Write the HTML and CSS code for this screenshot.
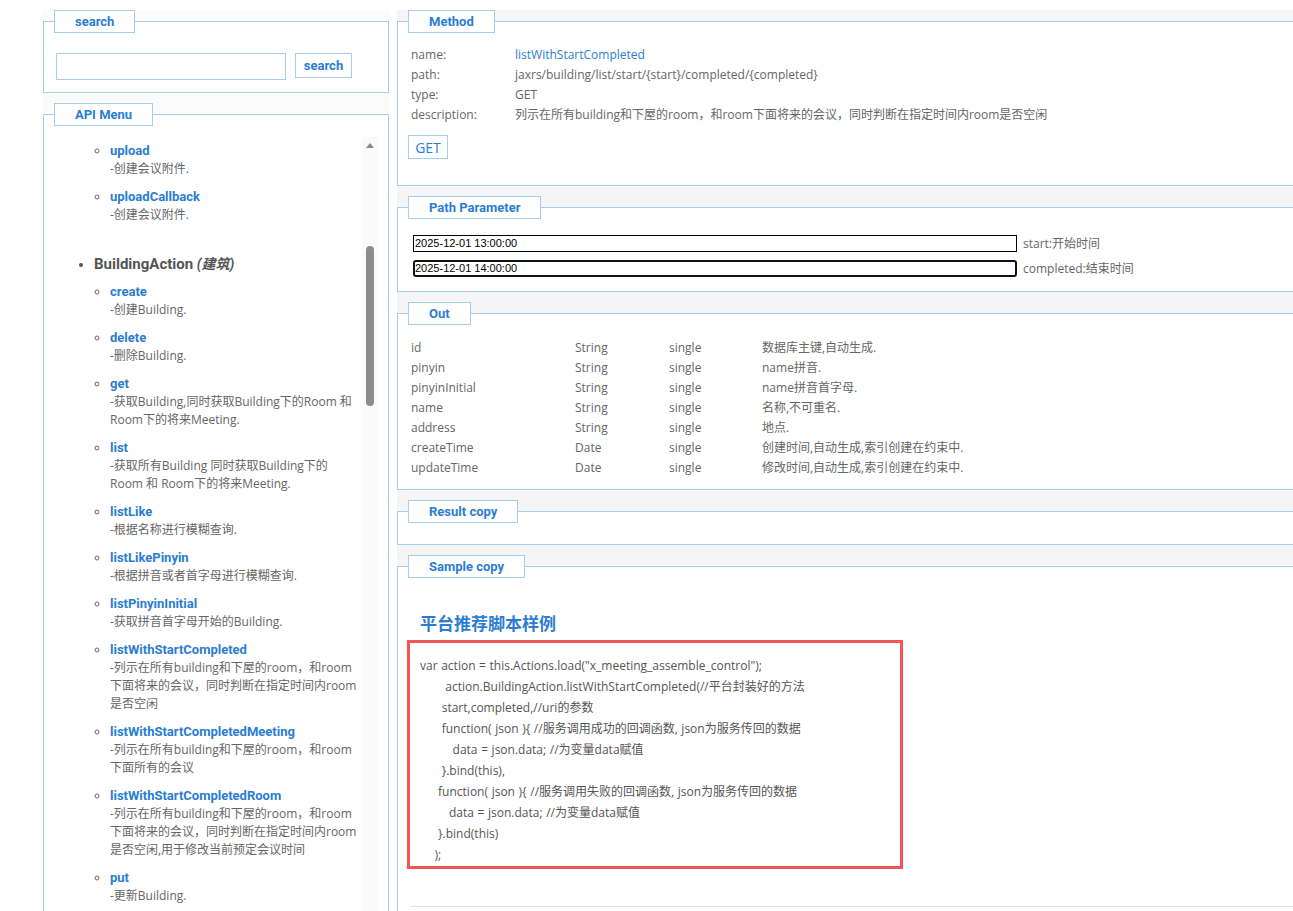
FILE: index.html
```html
<!DOCTYPE html>
<html lang="zh-CN">
<head>
<meta charset="utf-8">
<title>API</title>
<link rel="stylesheet" href="styles.css">
</head>
<body>
<div class="page">
  <div class="left">
    <fieldset class="box search-box">
      <legend>search</legend>
      <div class="search-row">
        <input class="search-input" type="text">
        <button class="btn">search</button>
      </div>
    </fieldset>
    <fieldset class="box menu-box">
      <legend>API Menu</legend>
      <div class="menu-scroll">
        <ul class="actions">
          <li class="action prev">
            <ul class="methods">
              <li><a class="mlink">upload</a><div class="mdesc">-创建会议附件.</div></li>
              <li><a class="mlink">uploadCallback</a><div class="mdesc">-创建会议附件.</div></li>
            </ul>
          </li>
          <li class="action">
            <div class="aname">BuildingAction <i>(建筑)</i></div>
            <ul class="methods">
              <li><a class="mlink">create</a><div class="mdesc">-创建Building.</div></li>
              <li><a class="mlink">delete</a><div class="mdesc">-删除Building.</div></li>
              <li><a class="mlink">get</a><div class="mdesc">-获取Building,同时获取Building下的Room 和Room下的将来Meeting.</div></li>
              <li><a class="mlink">list</a><div class="mdesc">-获取所有Building 同时获取Building下的Room 和 Room下的将来Meeting.</div></li>
              <li><a class="mlink">listLike</a><div class="mdesc">-根据名称进行模糊查询.</div></li>
              <li><a class="mlink">listLikePinyin</a><div class="mdesc">-根据拼音或者首字母进行模糊查询.</div></li>
              <li><a class="mlink">listPinyinInitial</a><div class="mdesc">-获取拼音首字母开始的Building.</div></li>
              <li><a class="mlink">listWithStartCompleted</a><div class="mdesc">-列示在所有building和下屋的room，和room下面将来的会议，同时判断在指定时间内room是否空闲</div></li>
              <li><a class="mlink">listWithStartCompletedMeeting</a><div class="mdesc">-列示在所有building和下屋的room，和room下面所有的会议</div></li>
              <li><a class="mlink">listWithStartCompletedRoom</a><div class="mdesc">-列示在所有building和下屋的room，和room下面将来的会议，同时判断在指定时间内room是否空闲,用于修改当前预定会议时间</div></li>
              <li><a class="mlink">put</a><div class="mdesc">-更新Building.</div></li>
            </ul>
          </li>
        </ul>
        <div class="scrollbar"><span class="arrow"></span><span class="thumb"></span></div>
      </div>
    </fieldset>
  </div>

  <div class="right">
    <fieldset class="box">
      <legend>Method</legend>
      <div class="method-body">
        <div class="kv"><span class="k">name:</span><span class="v blue">listWithStartCompleted</span></div>
        <div class="kv"><span class="k">path:</span><span class="v">jaxrs/building/list/start/{start}/completed/{completed}</span></div>
        <div class="kv"><span class="k">type:</span><span class="v">GET</span></div>
        <div class="kv"><span class="k">description:</span><span class="v">列示在所有building和下屋的room，和room下面将来的会议，同时判断在指定时间内room是否空闲</span></div>
        <button class="get-btn">GET</button>
      </div>
    </fieldset>

    <fieldset class="box">
      <legend>Path Parameter</legend>
      <div class="param-body">
        <div class="param-row"><input class="param-input" type="text" value="2025-12-01 13:00:00"><span class="plabel">start:开始时间</span></div>
        <div class="param-row"><input class="param-input focused" type="text" value="2025-12-01 14:00:00"><span class="plabel">completed:结束时间</span></div>
      </div>
    </fieldset>

    <fieldset class="box">
      <legend>Out</legend>
      <div class="out-body">
        <span>id</span><span>String</span><span>single</span><span>数据库主键,自动生成.</span>
        <span>pinyin</span><span>String</span><span>single</span><span>name拼音.</span>
        <span>pinyinInitial</span><span>String</span><span>single</span><span>name拼音首字母.</span>
        <span>name</span><span>String</span><span>single</span><span>名称,不可重名.</span>
        <span>address</span><span>String</span><span>single</span><span>地点.</span>
        <span>createTime</span><span>Date</span><span>single</span><span>创建时间,自动生成,索引创建在约束中.</span>
        <span>updateTime</span><span>Date</span><span>single</span><span>修改时间,自动生成,索引创建在约束中.</span>
      </div>
    </fieldset>

    <fieldset class="box">
      <legend>Result copy</legend>
      <div class="result-body"></div>
    </fieldset>

    <fieldset class="box sample-box">
      <legend>Sample copy</legend>
      <div class="sample-body">
        <h3 class="sample-title">平台推荐脚本样例</h3>
        <pre class="code">var action = this.Actions.load("x_meeting_assemble_control");
       action.BuildingAction.listWithStartCompleted(//平台封装好的方法
      start,completed,//uri的参数
      function( json ){ //服务调用成功的回调函数, json为服务传回的数据
         data = json.data; //为变量data赋值
      }.bind(this),
     function( json ){ //服务调用失败的回调函数, json为服务传回的数据
        data = json.data; //为变量data赋值
     }.bind(this)
    );</pre>
        <hr class="sep">
      </div>
    </fieldset>
  </div>
</div>
</body>
</html>
```
FILE: styles.css
```css
html, body {
  margin: 0;
  padding: 0;
  overflow: hidden;
  background: #ffffff;
}
body {
  font-family: "Open Sans", "Noto Sans CJK SC", sans-serif;
  font-size: 12px;
  color: #666666;
}
.page {
  display: flex;
  align-items: flex-start;
  gap: 8px;
  padding: 10px 0 0 43px;
  width: 1400px;
  height: 920px;
  box-sizing: border-box;
}
.left {
  flex: 0 0 346px;
  width: 346px;
  display: flex;
  flex-direction: column;
  gap: 10px;
  background: #fbfbfb;
}
.right {
  flex: 0 0 1000px;
  width: 1000px;
  display: flex;
  flex-direction: column;
  gap: 10px;
  background: #f5f5f5;
}
.box {
  margin: 0;
  padding: 0;
  border: 1px solid #a6cdf0;
  background: #ffffff;
  min-width: 0;
}
.box > legend {
  margin-left: 10px;
  padding: 0 20px;
  border: 1px solid #a6cdf0;
  background: #ffffff;
  color: #2b7dd3;
  font-family: Roboto, "Noto Sans CJK SC", sans-serif;
  font-weight: 700;
  font-size: 13px;
  line-height: 21px;
}

/* search */
.search-row {
  display: flex;
  align-items: flex-start;
  gap: 9px;
  padding: 20px 0 12px 12px;
}
.search-input {
  width: 230px;
  height: 27px;
  box-sizing: border-box;
  border: 1px solid #a6cdf0;
  padding: 0 4px;
  margin: 0;
  outline: none;
}
.btn {
  height: 25px;
  width: 57px;
  box-sizing: border-box;
  border: 1px solid #a6cdf0;
  background: #ffffff;
  color: #2b7dd3;
  font-family: Roboto, "Noto Sans CJK SC", sans-serif;
  font-weight: 700;
  font-size: 13px;
  padding: 0;
  margin: 0;
}

/* menu */
.menu-scroll {
  position: relative;
  margin: 11px 10px 0 0;
  height: 790px;
  overflow: hidden;
}
.actions {
  margin: 0;
  padding: 5px 20px 0 50px;
  list-style: disc;
}
.action {
  color: #555555;
}
.action.prev {
  list-style: none;
}
.aname {
  font-family: Roboto, "Noto Sans CJK SC", sans-serif;
  font-size: 15px;
  font-weight: 700;
  line-height: 20px;
  margin: 30px 0 9px;
  color: #555555;
}
.aname i {
  font-size: 14px;
}
.methods {
  margin: 0;
  padding: 0 0 0 16px;
  list-style: circle;
}
.methods > li {
  margin-bottom: 10px;
  color: #666666;
}
.mlink {
  display: block;
  color: #2b7dd3;
  font-family: Roboto, "Noto Sans CJK SC", sans-serif;
  font-weight: 700;
  font-size: 13px;
  line-height: 18px;
}
.mdesc {
  font-size: 12px;
  line-height: 18px;
  color: #666666;
}
.scrollbar {
  position: absolute;
  top: 0;
  right: 0;
  bottom: 0;
  width: 16px;
  background: #fafafa;
}
.arrow {
  position: absolute;
  top: 6px;
  left: 4px;
  width: 0;
  height: 0;
  border-left: 4px solid transparent;
  border-right: 4px solid transparent;
  border-bottom: 5px solid #8a8a8a;
}
.thumb {
  position: absolute;
  top: 109px;
  left: 4px;
  width: 8px;
  height: 160px;
  border-radius: 4px;
  background: #8c8c8c;
}

/* method */
.method-body {
  padding: 12px 0 26px 10px;
}
.kv {
  display: flex;
  padding-left: 3px;
  line-height: 20px;
}
.k {
  flex: 0 0 104px;
}
.blue {
  color: #2b7dd3;
}
.get-btn {
  margin-top: 10px;
  height: 24px;
  width: 40px;
  box-sizing: border-box;
  border: 1px solid #a6cdf0;
  background: #ffffff;
  color: #2b7dd3;
  font-family: "Open Sans", "Noto Sans CJK SC", sans-serif;
  font-size: 14px;
  padding: 0;
}

/* params */
.param-body {
  display: flex;
  flex-direction: column;
  gap: 7px;
  padding: 15px 0 14px 15px;
}
.param-row {
  display: flex;
  align-items: center;
  gap: 6px;
}
.param-input {
  width: 604px;
  height: 17px;
  box-sizing: border-box;
  margin: 0;
  padding: 0 1px;
  border: 1px solid #000000;
  font-family: "Liberation Sans", Arial, sans-serif;
  font-size: 11px;
  color: #000000;
  outline: none;
}
.param-input.focused {
  border: 2px solid #111111;
  border-radius: 3px;
  padding: 0;
}
.plabel {
  color: #666666;
}

/* out */
.out-body {
  display: grid;
  grid-template-columns: 164px 94px 93px 1fr;
  line-height: 20px;
  padding: 13px 0 11px 13px;
}

/* result */
.result-body {
  height: 21px;
}

/* sample */
.sample-box {
  height: 420px;
}
.sample-body {
  padding: 34px 0 0 9px;
}
.sample-title {
  margin: 0 0 4px 13px;
  font-size: 17px;
  line-height: 24px;
  font-weight: 700;
  color: #2b7dd3;
}
.code {
  margin: 0;
  width: 496px;
  box-sizing: border-box;
  border: 3px solid #f45454;
  padding: 12px 0 1px 10px;
  font-family: "Open Sans", "Noto Sans CJK SC", sans-serif;
  font-size: 12px;
  line-height: 21px;
  word-spacing: 0.5px;
  color: #555555;
  white-space: pre;
}
.sep {
  margin: 37px 0 0 3px;
  border: 0;
  border-top: 1px solid #e2e2e2;
  height: 0;
}
```
